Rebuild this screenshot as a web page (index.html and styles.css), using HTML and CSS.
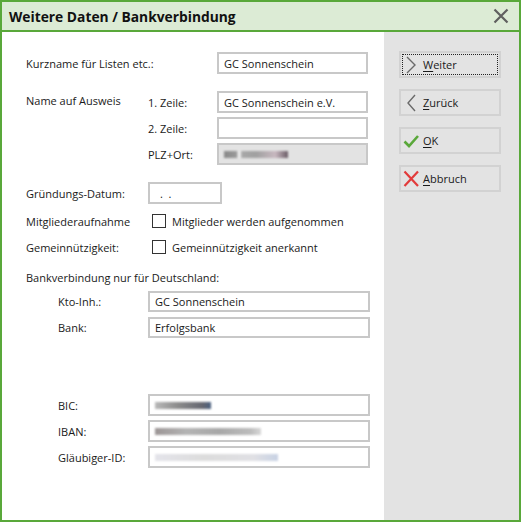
FILE: index.html
```html
<!DOCTYPE html>
<html lang="de">
<head>
<meta charset="utf-8">
<title>Weitere Daten / Bankverbindung</title>
<link rel="stylesheet" href="styles.css">
</head>
<body>
<div class="window">
  <div class="titlebar">
    <span class="title">Weitere Daten / Bankverbindung</span>
    <svg class="close" width="16" height="16" viewBox="0 0 16 16"><path d="M1.5 1.5 L14.5 14.5 M14.5 1.5 L1.5 14.5" stroke="#5f5f5f" stroke-width="2.2" fill="none"/></svg>
  </div>
  <div class="body">
    <div class="form">
      <div class="row r-kurz">
        <span class="lbl w-wide">Kurzname für Listen etc.:</span>
        <span class="field w-name">GC Sonnenschein</span>
      </div>

      <div class="block r-ausweis">
        <span class="lbl w-main">Name auf Ausweis</span>
        <div class="sub">
          <div class="row"><span class="lbl w-sub">1. Zeile:</span><span class="field w-name">GC Sonnenschein e.V.</span></div>
          <div class="row"><span class="lbl w-sub">2. Zeile:</span><span class="field w-name"></span></div>
          <div class="row"><span class="lbl w-sub">PLZ+Ort:</span><span class="field w-name readonly"><span class="smudge smudge-plz"></span></span></div>
        </div>
      </div>

      <div class="row r-datum">
        <span class="lbl w-main">Gründungs-Datum:</span>
        <span class="field w-date"><span class="dots">.&nbsp;&nbsp;.</span></span>
      </div>
      <div class="row r-check">
        <span class="lbl w-main">Mitgliederaufnahme</span>
        <span class="checkbox"></span><span class="cb-text">Mitglieder werden aufgenommen</span>
      </div>
      <div class="row r-check">
        <span class="lbl w-main">Gemeinnützigkeit:</span>
        <span class="checkbox"></span><span class="cb-text">Gemeinnützigkeit anerkannt</span>
      </div>

      <div class="section-lbl">Bankverbindung nur für Deutschland:</div>
      <div class="bank">
        <div class="row"><span class="lbl w-bank">Kto-Inh.:</span><span class="field w-long">GC Sonnenschein</span></div>
        <div class="row"><span class="lbl w-bank">Bank:</span><span class="field w-long">Erfolgsbank</span></div>
      </div>
      <div class="bank codes">
        <div class="row"><span class="lbl w-bank">BIC:</span><span class="field w-long"><span class="smudge smudge-bic"></span></span></div>
        <div class="row"><span class="lbl w-bank">IBAN:</span><span class="field w-long"><span class="smudge smudge-iban"></span></span></div>
        <div class="row"><span class="lbl w-bank">Gläubiger-ID:</span><span class="field w-long"><span class="smudge smudge-glid"></span></span></div>
      </div>
    </div>

    <div class="side">
      <button class="btn focused">
        <svg width="16" height="18" viewBox="0 0 16 18"><path d="M4 1 L12 9 L4 17" stroke="#6a6a6a" stroke-width="1.4" fill="none"/></svg>
        <span><u>W</u>eiter</span>
      </button>
      <button class="btn">
        <svg width="16" height="18" viewBox="0 0 16 18"><path d="M12 1 L5 9 L12 17" stroke="#6a6a6a" stroke-width="1.4" fill="none"/></svg>
        <span><u>Z</u>urück</span>
      </button>
      <button class="btn">
        <svg width="16" height="18" viewBox="0 0 16 18"><path d="M1.5 9.5 L6 14 L15 4" stroke="#5aa83a" stroke-width="2.6" fill="none"/></svg>
        <span><u>O</u>K</span>
      </button>
      <button class="btn">
        <svg width="16" height="18" viewBox="0 0 16 18"><path d="M1.5 1.5 L15 16 M15 1.5 L1.5 16" stroke="#e23b3b" stroke-width="2.2" fill="none"/></svg>
        <span><u>A</u>bbruch</span>
      </button>
    </div>
  </div>
</div>
</body>
</html>
```

FILE: styles.css
```css
* { box-sizing: border-box; }

html, body {
  margin: 0;
  padding: 0;
  background: #ffffff;
}

body {
  font-family: "Open Sans", "Noto Sans", "DejaVu Sans", sans-serif;
  font-size: 11px;
  color: #1a1a1a;
}

.window {
  width: 521px;
  height: 522px;
  border: 2px solid #59a83a;
  display: flex;
  flex-direction: column;
}

.titlebar {
  height: 30px;
  background: #dcebd5;
  border-bottom: 2px solid #59a83a;
  display: flex;
  align-items: center;
  justify-content: space-between;
  padding: 0 10px 0 7px;
  flex: none;
}

.title {
  font-weight: bold;
  font-size: 13.8px;
  color: #111;
}

.close { display: block; }

.body {
  flex: 1;
  display: flex;
}

.form {
  width: 382px;
  padding: 20px 0 0 24px;
  background: #fff;
}

.side {
  flex: 1;
  background: #e3e3e3;
  padding: 19px 0 0 15px;
  display: flex;
  flex-direction: column;
  gap: 11px;
}

.row {
  display: flex;
  align-items: center;
}

.lbl { flex: none; }
.w-wide { width: 191px; }
.w-main { width: 122px; }
.w-sub { width: 69px; }
.w-bank { width: 90px; }

.field {
  flex: none;
  height: 22px;
  border: 2px solid #c8c8c8;
  background: #fff;
  padding: 0 5px;
  display: flex;
  align-items: center;
  white-space: nowrap;
}
.w-name { width: 151px; }
.w-date { width: 74px; }
.w-long { width: 222px; }
.readonly { background: #e3e3e3; }

.dots { padding-left: 5px; }

.r-ausweis {
  display: flex;
  margin-top: 17px;
}
.r-ausweis > .lbl { padding-top: 2px; }
.sub {
  display: flex;
  flex-direction: column;
  gap: 4px;
}

.r-datum { margin-top: 17px; }

.r-check { height: 22px; margin-top: 6px; }
.r-check + .r-check { margin-top: 4px; }

.checkbox {
  flex: none;
  width: 14px;
  height: 14px;
  border: 1px solid #333;
  margin-left: 4px;
  margin-right: 6px;
  background: #fff;
}

.section-lbl { margin-top: 12px; }

.bank {
  margin-left: 32px;
  margin-top: 6px;
  display: flex;
  flex-direction: column;
  gap: 5px;
}
.bank .field { height: 21px; }
.codes { margin-top: 56px; gap: 4px; }
.codes .field { height: 22px; }

.smudge {
  display: block;
  height: 7px;
  filter: blur(1.2px);
}
.smudge-plz {
  width: 64px;
  background: linear-gradient(90deg, #888 0, #9a9a9a 20%, #f0f0f0 22%, #f0f0f0 25%, #a8a8a8 28%, #a0a0a0 50%, #c8b8c0 80%, #6a5c66 100%);
}
.smudge-bic {
  width: 56px;
  background: linear-gradient(90deg, #b8b8b8 0, #8c8c8c 40%, #646670 85%, #4a6080 100%);
}
.smudge-iban {
  width: 106px;
  background: linear-gradient(90deg, #9c9696 0, #b4b4b4 30%, #a8a8a8 60%, #bcbcbc 90%, #d8d8d8 100%);
}
.smudge-glid {
  width: 123px;
  background: linear-gradient(90deg, #e4e4ea 0, #dcdcdc 40%, #e0e0e4 80%, #c8d2e4 100%);
}

.btn {
  width: 102px;
  height: 27px;
  background: #e3e3e3;
  border: 2px solid #d2d2d2;
  font: inherit;
  font-size: 11px;
  color: #1a1a1a;
  display: flex;
  align-items: center;
  gap: 4px;
  padding: 0 0 0 2px;
  text-align: left;
}
.btn svg { flex: none; display: block; }
.btn u { text-underline-offset: 2px; }

.focused { outline: 1px dotted #222; outline-offset: -4px; }
```
